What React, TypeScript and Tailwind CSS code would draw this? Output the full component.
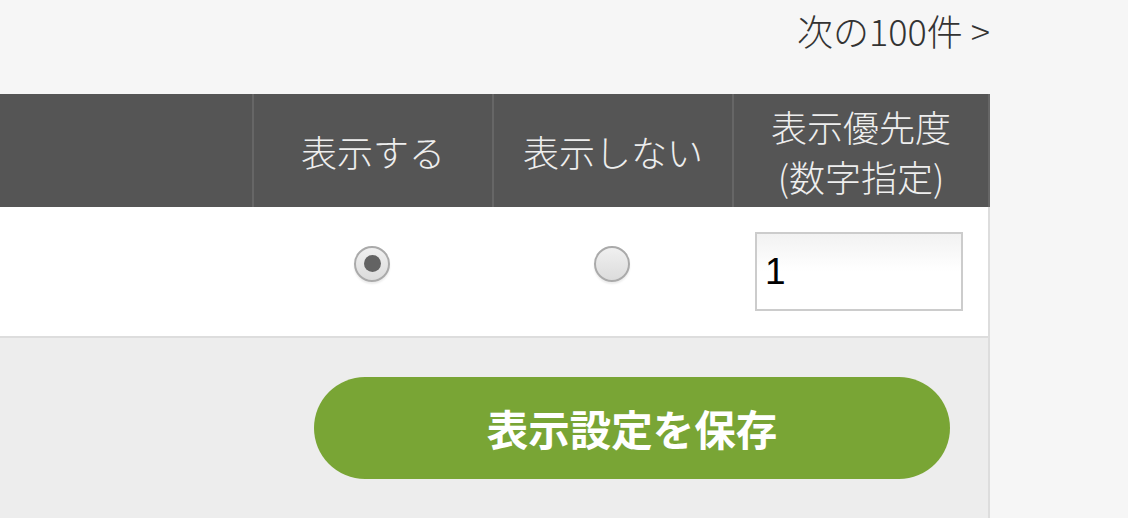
import React from 'react';

function Radio({ checked }: { checked?: boolean }) {
    return (
        <span className="flex h-[36px] w-[36px] items-center justify-center rounded-full border-2 border-[#aaa] bg-gradient-to-b from-[#f0f0f0] to-[#dcdcdc] shadow-[0_2px_2px_rgba(0,0,0,0.08)]">
            {checked && <span className="h-[17px] w-[17px] rounded-full bg-[#636363]" />}
        </span>
    );
}

export default function App() {
    return (
        <div
            className="min-h-[518px] w-full bg-[#f6f6f6] text-[#333]"
            style={{ fontFamily: '"Noto Sans CJK JP", "Noto Sans", sans-serif' }}
        >
            <div className="w-[990px]">
                <div className="flex h-[94px] items-start justify-end pt-[4px]">
                    <span className="text-[36px] font-light leading-[52px] text-[#333]">次の100件 &gt;</span>
                </div>

                <div className="grid grid-cols-[252px_240px_240px_258px] bg-[#555] text-[36px] font-light leading-[50px] text-[#eee]">
                    <div className="h-[113px]" />
                    <div className="flex items-center justify-center border-l-2 border-[#666]">表示する</div>
                    <div className="flex items-center justify-center border-l-2 border-[#666]">表示しない</div>
                    <div className="flex flex-col items-center justify-center border-x-2 border-[#666]">
                        <span>表示優先度</span>
                        <span>(数字指定)</span>
                    </div>
                </div>

                <div className="grid h-[131px] grid-cols-[252px_240px_240px_258px] border-b-2 border-r-2 border-[#ddd] bg-white">
                    <div />
                    <div className="flex items-center justify-center pb-[16px]">
                        <Radio checked />
                    </div>
                    <div className="flex items-center justify-center pb-[16px]">
                        <Radio />
                    </div>
                    <div className="flex items-center pl-[23px]">
                        <div
                            className="flex h-[79px] w-[208px] items-center border-2 border-[#ccc] bg-gradient-to-b from-[#f2f2f2] via-white to-white pl-[8px] text-[37px] text-black"
                            style={{ fontFamily: '"Liberation Sans", Arial, sans-serif' }}
                        >
                            1
                        </div>
                    </div>
                </div>

                <div className="flex h-[180px] justify-end border-r-2 border-[#ddd] bg-[#ededed] pt-[39px] pr-[38px]">
                    <button className="flex h-[102px] w-[636px] items-center justify-center rounded-full bg-[#79a535] text-[41.5px] font-bold text-white">
                        表示設定を保存
                    </button>
                </div>
            </div>
        </div>
    );
}
